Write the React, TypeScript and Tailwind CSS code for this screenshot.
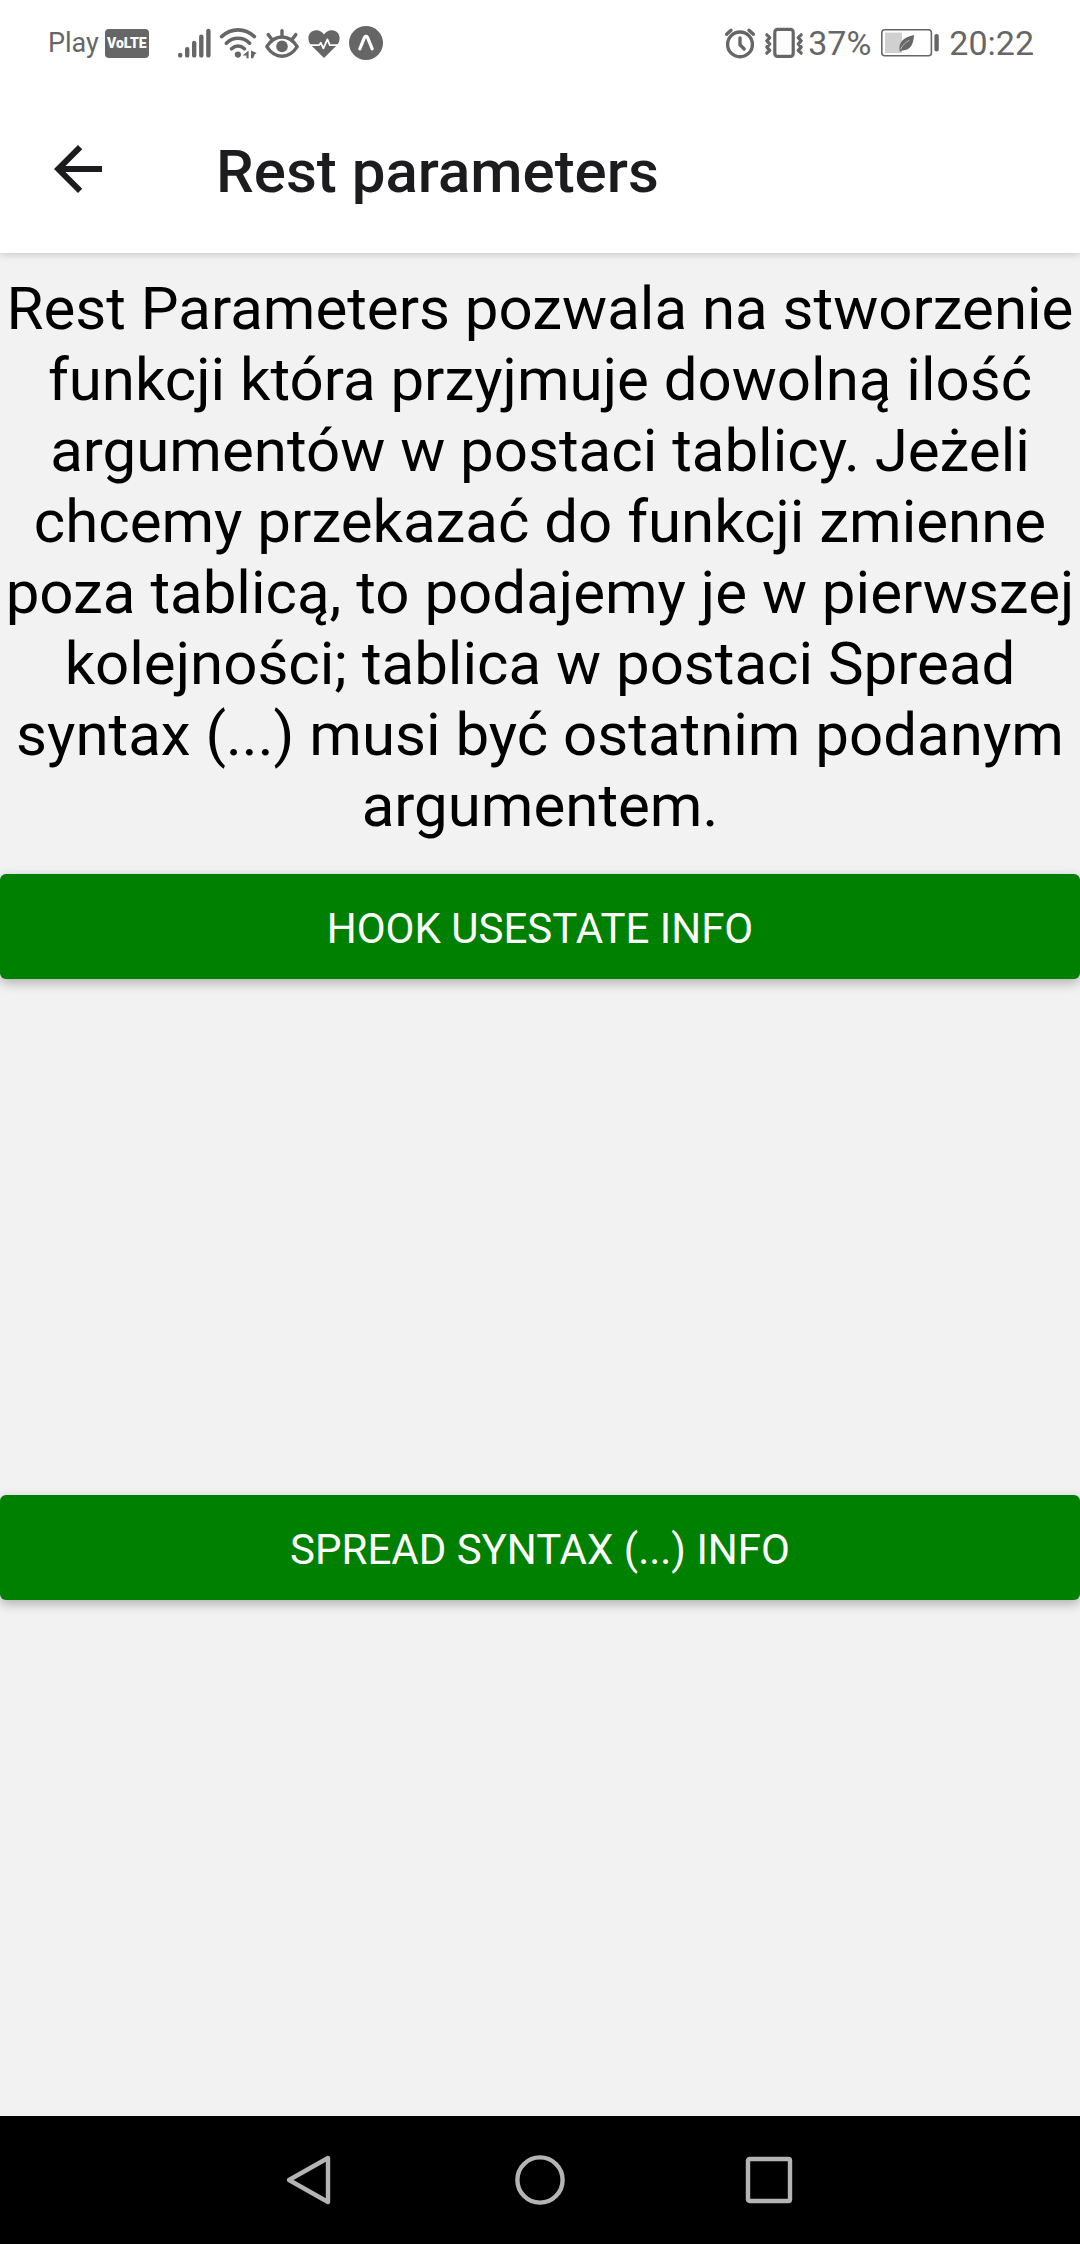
import type { ReactNode } from "react";

function SignalIcon() {
  return (
    <svg width="34" height="34" viewBox="0 0 34 34" fill="none" stroke="currentColor" strokeWidth="4.4" strokeLinecap="round">
      <path d="M3.2 29v.4M10.2 23.2v6.2M17.2 17v12.4M24.3 10.6v18.8M31.4 5v24.4" />
    </svg>
  );
}

function WifiIcon() {
  return (
    <svg width="38" height="34" viewBox="0 0 38 34" fill="none" stroke="currentColor" strokeWidth="3.6" strokeLinecap="round">
      <path d="M2.6 10.6C12.5 1.6 25.5 1.6 35.4 10.6M7.4 17.2C14 10.6 24 10.6 30.6 17.2M12.6 22.8C16.4 19.2 21.6 19.2 25.4 22.8" />
      <circle cx="18.9" cy="28.6" r="3.1" fill="currentColor" stroke="none" />
      <path d="M29.6 24.4v7.8h-2.2v-2.6h-3.8zM32 24.4l5.6 2.6-2 1.400-1.400 3.800H32z" fill="currentColor" stroke="none" />
    </svg>
  );
}

function EyeIcon() {
  return (
    <svg width="34" height="34" viewBox="0 0 34 34" fill="none" stroke="currentColor" strokeWidth="3.4" strokeLinecap="round">
      <path d="M1.8 20.6C10 7.8 24 7.8 32.2 20.6C24 33.4 10 33.4 1.8 20.6Z" strokeLinejoin="round" />
      <circle cx="17" cy="20.4" r="5.8" fill="currentColor" stroke="none" />
      <path d="M17 10.4V4.6M6.4 12.8L3.2 8.6M27.6 12.8l3.2-4.2" />
    </svg>
  );
}

function HeartIcon() {
  return (
    <svg width="34" height="34" viewBox="0 0 34 34">
      <path d="M17 32L4.4 19.4C-.6 14 .8 6.2 7.4 4.6C11.2 3.7 15 5.4 17 8.6C19 5.4 22.8 3.7 26.6 4.6C33.2 6.2 34.6 14 29.6 19.4Z" fill="currentColor" />
      <path d="M2.500 19.2H12l1.8-2.4 2.6 5.6 4-9 2.4 5.8h8.800" fill="none" stroke="white" strokeWidth="1.8" strokeLinejoin="round" />
    </svg>
  );
}

function ExpoIcon() {
  return (
    <svg width="34" height="34" viewBox="0 0 34 34">
      <circle cx="17" cy="17" r="17" fill="currentColor" />
      <path d="M10.8 22.8L15.6 11.2Q17 9.6 18.4 11.2L23.2 22.8" fill="none" stroke="white" strokeWidth="3.2" strokeLinecap="round" strokeLinejoin="round" />
    </svg>
  );
}

function AlarmIcon() {
  return (
    <svg width="32" height="34" viewBox="0 0 32 34" fill="none" stroke="currentColor" strokeWidth="3.4" strokeLinecap="round">
      <circle cx="16" cy="18.4" r="12.4" />
      <path d="M16 12v6.8l4.2 4.2M2.6 8.2L7 4.2M29.4 8.2L25 4.2" />
    </svg>
  );
}

function VibrateIcon() {
  return (
    <svg width="40" height="34" viewBox="0 0 40 34" fill="none" stroke="currentColor" strokeWidth="3.2" strokeLinecap="round" strokeLinejoin="round">
      <rect x="10.8" y="3.4" width="18.4" height="27" rx="2.8" />
      <path d="M2.8 8.8l3 2.8-3 3.2 3 3.2-3 3.2 3 3.2-3 2.8M37.2 8.8l-3 2.8 3 3.2-3 3.2 3 3.2-3 3.2 3 2.8" />
    </svg>
  );
}

function BatteryIcon() {
  return (
    <svg width="58" height="28" viewBox="0 0 58 28">
      <rect x=".8" y=".8" width="49.6" height="26" rx="3" fill="none" stroke="currentColor" strokeWidth="1.6" />
      <rect x="4" y="3.6" width="17" height="20.4" fill="#d0d0d0" />
      <path d="M18.6 22C17.4 13 22.4 8.6 33 6C32.6 15 29.6 21.8 20.8 21.4L19.2 22.8Z" fill="currentColor" />
      <path d="M19.4 20.4C21.6 15.8 24.6 13.4 28.4 11.2" fill="none" stroke="#bbb" strokeWidth="1" />
      <rect x="53.4" y="5" width="4.4" height="17.4" rx="2" fill="currentColor" />
    </svg>
  );
}

function NavButton({ label, children }: { label: string; children: ReactNode }) {
  return (
    <button type="button" aria-label={label} className="flex flex-1 items-center justify-center">
      <svg width="50" height="50" viewBox="0 0 50 50" fill="none" stroke="#b4b4b4" strokeWidth="4.4" strokeLinejoin="round">
        {children}
      </svg>
    </button>
  );
}

function InfoSection({ label }: { label: string }) {
  return (
    <section>
      <button
        type="button"
        className="w-full rounded-md bg-[#008000] pt-7 pb-6 text-[42px] leading-[53px] text-white uppercase shadow-[0_4px_12px_rgba(0,0,0,0.28)]"
      >
        {label}
      </button>
    </section>
  );
}

export default function App() {
  return (
    <div className="flex min-h-screen flex-col bg-[#f2f2f2] font-['Roboto',sans-serif]">
      <div className="z-10 bg-white shadow-[0_1px_8px_rgba(0,0,0,0.2)]">
        <div className="flex h-[86px] items-center justify-between pr-[46px] pl-12 text-[#666]">
          <div className="flex items-center">
            <span className="text-[27px] leading-8">Play</span>
            <span className="ml-1.5 flex h-[29px] w-11 items-center justify-center rounded bg-[#666] text-[14px] font-black text-white">
              VoLTE
            </span>
            <div className="ml-7 flex items-center gap-2">
              <SignalIcon />
              <WifiIcon />
              <EyeIcon />
              <HeartIcon />
              <ExpoIcon />
            </div>
          </div>
          <div className="flex items-center">
            <AlarmIcon />
            <div className="ml-2">
              <VibrateIcon />
            </div>
            <span className="ml-1 text-[34px] leading-10">37%</span>
            <div className="ml-2.5">
              <BatteryIcon />
            </div>
            <time className="ml-2.5 text-[34px] leading-10">20:22</time>
          </div>
        </div>

        <header className="flex items-center pt-11 pb-10 pl-[42px]">
          <button type="button" aria-label="Wstecz" className="-mt-1.5">
            <svg width="72" height="72" viewBox="0 0 24 24" fill="#1c1c1e">
              <path d="M20 11H7.83l5.59-5.59L12 4l-8 8 8 8 1.41-1.41L7.83 13H20v-2z" />
            </svg>
          </button>
          <h1 className="ml-[102px] text-[60px] leading-[83px] font-medium text-[#1c1c1e]">Rest parameters</h1>
        </header>
      </div>

      <main className="grid grow auto-rows-fr">
        <section className="pt-5">
          <p className="text-center text-[60px] leading-[71px] text-black">
            Rest Parameters pozwala na stworzenie funkcji która przyjmuje dowolną ilość argumentów w postaci tablicy. Jeżeli
            chcemy przekazać do funkcji zmienne poza tablicą, to podajemy je w pierwszej kolejności; tablica w postaci Spread
            syntax (...) musi być ostatnim podanym argumentem.
          </p>
        </section>
        <InfoSection label="Hook useState info" />
        <InfoSection label="Spread syntax (...) info" />
      </main>

      <nav aria-label="System" className="flex h-32 bg-black px-[197px]">
        <NavButton label="Wstecz">
          <path d="M42 3L3 25l39 22z" />
        </NavButton>
        <NavButton label="Ekran główny">
          <circle cx="25" cy="25" r="22.6" />
        </NavButton>
        <NavButton label="Ostatnie aplikacje">
          <rect x="4" y="4" width="42" height="42" rx="1.5" />
        </NavButton>
      </nav>
    </div>
  );
}
